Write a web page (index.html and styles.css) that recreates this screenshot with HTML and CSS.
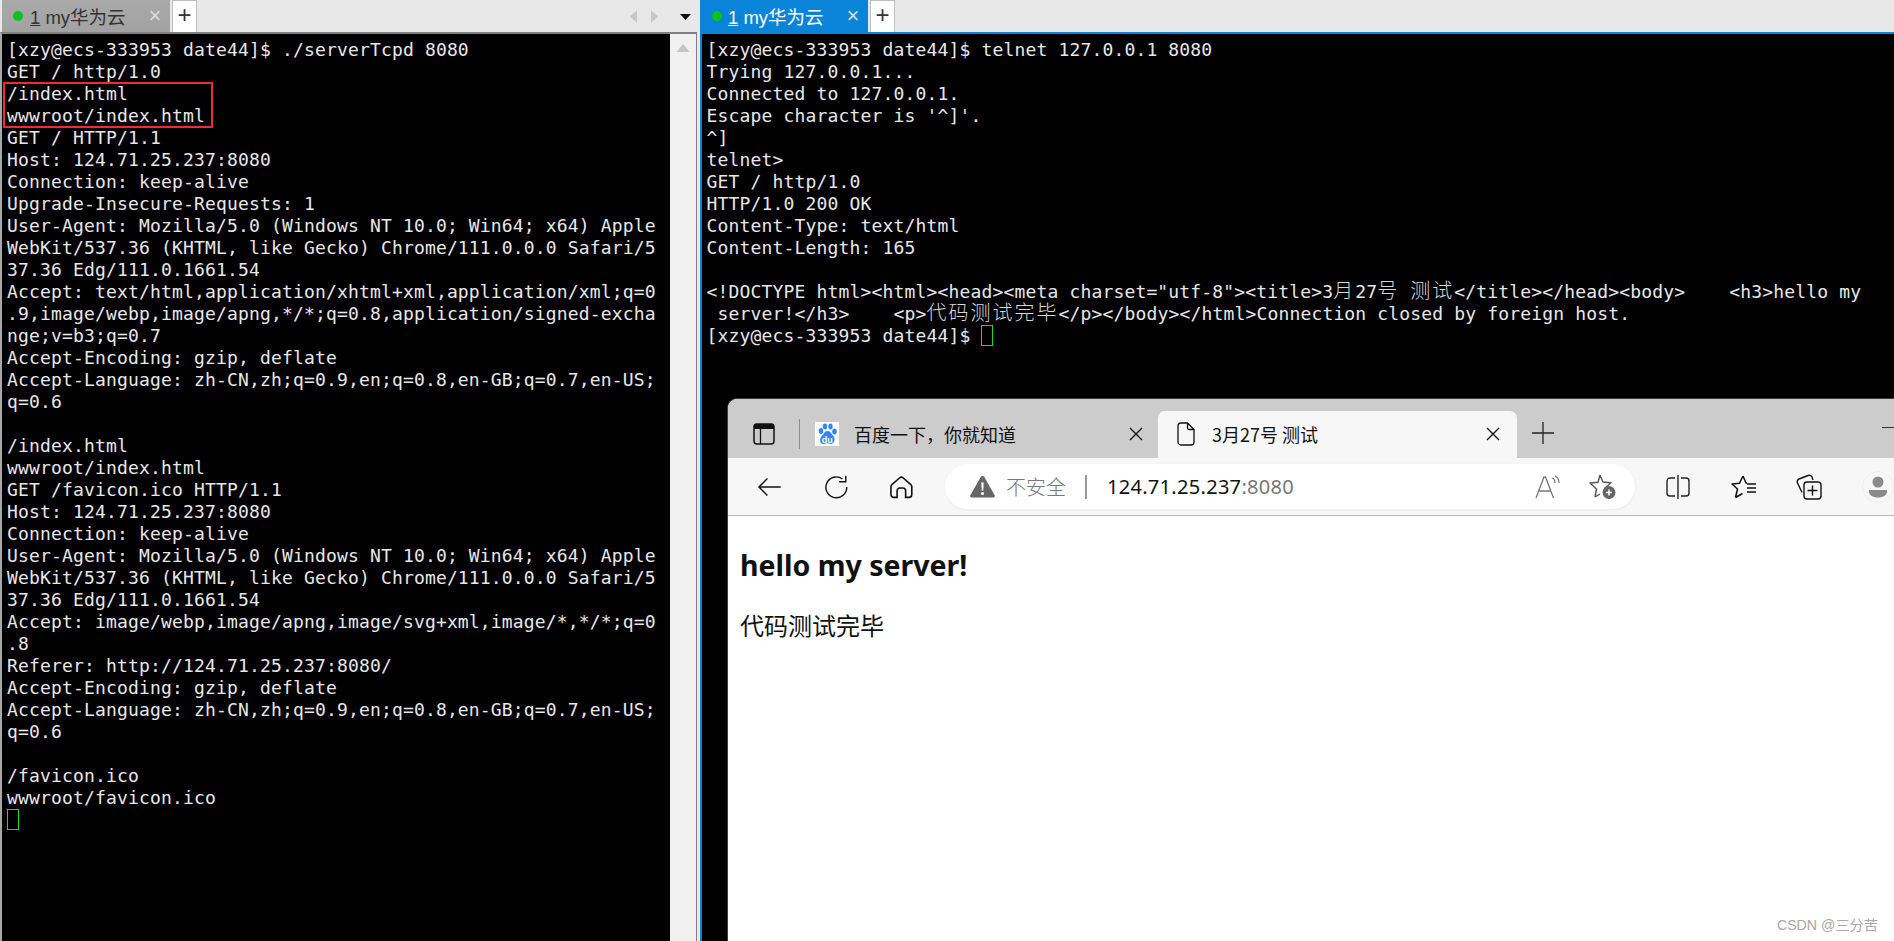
FILE: index.html
```html
<!DOCTYPE html>
<html lang="zh">
<head>
<meta charset="utf-8">
<title>Terminal and browser</title>
<link rel="stylesheet" href="styles.css">
</head>
<body>
<div class="desktop">
  <section class="pane pane-left">
    <div class="tabbar">
      <div class="tab tab-idle"><span class="dot"></span><span class="tab-label"><u>1</u> my华为云</span><span class="tab-x">×</span></div>
      <div class="tab-add">+</div>
      <div class="tab-nav">
        <svg width="70" height="32" viewBox="0 0 70 32"><path d="M9 10v13l-7-6.500z" fill="#c8c8c8"/><path d="M23 10v13l7-6.500z" fill="#c8c8c8"/><path d="M52 14h11l-5.500 6z" fill="#111"/></svg>
      </div>
    </div>
    <div class="term-wrap">
      <pre class="term">[xzy@ecs-333953 date44]$ ./serverTcpd 8080
GET / http/1.0
/index.html
wwwroot/index.html
GET / HTTP/1.1
Host: 124.71.25.237:8080
Connection: keep-alive
Upgrade-Insecure-Requests: 1
User-Agent: Mozilla/5.0 (Windows NT 10.0; Win64; x64) Apple
WebKit/537.36 (KHTML, like Gecko) Chrome/111.0.0.0 Safari/5
37.36 Edg/111.0.1661.54
Accept: text/html,application/xhtml+xml,application/xml;q=0
.9,image/webp,image/apng,*/*;q=0.8,application/signed-excha
nge;v=b3;q=0.7
Accept-Encoding: gzip, deflate
Accept-Language: zh-CN,zh;q=0.9,en;q=0.8,en-GB;q=0.7,en-US;
q=0.6

/index.html
wwwroot/index.html
GET /favicon.ico HTTP/1.1
Host: 124.71.25.237:8080
Connection: keep-alive
User-Agent: Mozilla/5.0 (Windows NT 10.0; Win64; x64) Apple
WebKit/537.36 (KHTML, like Gecko) Chrome/111.0.0.0 Safari/5
37.36 Edg/111.0.1661.54
Accept: image/webp,image/apng,image/svg+xml,image/*,*/*;q=0
.8
Referer: http://124.71.25.237:8080/
Accept-Encoding: gzip, deflate
Accept-Language: zh-CN,zh;q=0.9,en;q=0.8,en-GB;q=0.7,en-US;
q=0.6

/favicon.ico
wwwroot/favicon.ico
<span class="cursor"></span></pre>
      <div class="scrollbar"><svg width="14" height="9" viewBox="0 0 14 9"><path d="M7 0l6.500 8H.5z" fill="#c4c4c4"/></svg></div>
      <div class="red-box"></div>
    </div>
  </section>
  <div class="gap"></div>
  <section class="pane pane-right">
    <div class="tabbar">
      <div class="tab tab-active"><span class="dot"></span><span class="tab-label"><u>1</u> my华为云</span><span class="tab-x">×</span></div>
      <div class="tab-add">+</div>
    </div>
    <div class="term-wrap term-wrap-right">
      <pre class="term">[xzy@ecs-333953 date44]$ telnet 127.0.0.1 8080
Trying 127.0.0.1...
Connected to 127.0.0.1.
Escape character is '^]'.
^]
telnet&gt;
GET / http/1.0
HTTP/1.0 200 OK
Content-Type: text/html
Content-Length: 165

&lt;!DOCTYPE html&gt;&lt;html&gt;&lt;head&gt;&lt;meta charset="utf-8"&gt;&lt;title&gt;3<span class="cjk">月</span>27<span class="cjk">号</span> <span class="cjk">测试</span>&lt;/title&gt;&lt;/head&gt;&lt;body&gt;    &lt;h3&gt;hello my
 server!&lt;/h3&gt;    &lt;p&gt;<span class="cjk">代码测试完毕</span>&lt;/p&gt;&lt;/body&gt;&lt;/html&gt;Connection closed by foreign host.
[xzy@ecs-333953 date44]$ <span class="cursor"></span></pre>
    </div>
  </section>

  <div class="browser">
    <div class="b-tabs">
      <svg class="b-sidebar" width="22" height="22" viewBox="0 0 22 22"><rect x="1" y="1" width="20" height="20" rx="3" fill="none" stroke="#111" stroke-width="1.500"/><path d="M1 3.500a2.500 2.500 0 0 1 2.500-2.500h15a2.500 2.500 0 0 1 2.500 2.500V6H1z" fill="#111"/><path d="M7.500 6v15" stroke="#111" stroke-width="1.300"/></svg>
      <span class="b-sep"></span>
      <svg class="b-fav" width="24" height="24" viewBox="0 0 24 24"><rect width="24" height="24" fill="#fff"/><g fill="#3385ff"><ellipse cx="6" cy="9" rx="2.300" ry="3"/><ellipse cx="10" cy="4.500" rx="2.200" ry="3"/><ellipse cx="15.500" cy="4.500" rx="2.200" ry="3"/><ellipse cx="19.500" cy="9.500" rx="2.300" ry="3"/><path d="M12.500 9c3 0 4 3 6 5 2 2.500 1 8-2.500 8-1.500 0-2.500-.7-3.500-.7S10.500 22 8.500 22C5 22 4 17.500 6.500 14.500 8.500 12.500 9.500 9 12.500 9z"/></g><text x="12.300" y="20.500" class="b-du">du</text></svg>
      <span class="b-tab-title b-tab-title-idle">百度一下，你就知道</span>
      <svg class="b-close" width="14" height="14" viewBox="0 0 14 14"><path d="M1 1l12 12M13 1L1 13" stroke="#111" stroke-width="1.400" fill="none"/></svg>
      <div class="b-tab-active">
        <svg width="18" height="24" viewBox="0 0 18 24"><path d="M4 1h6.500L17 7.500V20a3 3 0 0 1-3 3H4a3 3 0 0 1-3-3V4a3 3 0 0 1 3-3zM10.500 1v5a1.500 1.500 0 0 0 1.500 1.500h5" fill="none" stroke="#111" stroke-width="1.300"/></svg>
        <span class="b-tab-title">3月27号 测试</span>
        <svg class="b-close-active" width="14" height="14" viewBox="0 0 14 14"><path d="M1 1l12 12M13 1L1 13" stroke="#111" stroke-width="1.400" fill="none"/></svg>
      </div>
      <svg class="b-plus" width="22" height="22" viewBox="0 0 22 22"><path d="M11 0v22M0 11h22" stroke="#222" stroke-width="1.300"/></svg>
      <span class="b-min"></span>
    </div>
    <div class="b-toolbar">
      <svg class="i-back" width="26" height="22" viewBox="0 0 26 22"><path d="M25 11H2M11 2l-9 9 9 9" fill="none" stroke="#111" stroke-width="1.500"/></svg>
      <svg class="i-reload" width="26" height="26" viewBox="0 0 26 26"><path d="M19.500 4.500A11 11 0 1 0 24 13" fill="none" stroke="#111" stroke-width="1.500"/><path d="M23 1v6.500h-7" fill="none" stroke="#111" stroke-width="1.500"/></svg>
      <svg class="i-home" width="24" height="24" viewBox="0 0 24 24"><path d="M10 2.500a3 3 0 0 1 4 0l8 7c.7.6 1 1.200 1 2V20a3 3 0 0 1-3 3h-3.500v-7a3 3 0 0 0-3-3h-3a3 3 0 0 0-3 3v7H4a3 3 0 0 1-3-3v-8.500c0-.8.300-1.400 1-2z" fill="none" stroke="#111" stroke-width="1.700"/></svg>
      <div class="b-pill">
        <svg width="25" height="23" viewBox="0 0 25 23"><path d="M12.500 1a2 2 0 0 1 1.800 1L24.500 20a1.500 1.500 0 0 1-1.300 2.500H1.800A1.500 1.500 0 0 1 .5 20L10.700 2a2 2 0 0 1 1.800-1z" fill="#666"/><path d="M11.300 7.500h2.400l-.4 8h-1.600z" fill="#fff"/><circle cx="12.500" cy="18.500" r="1.500" fill="#fff"/></svg>
        <span class="b-insecure">不安全</span>
        <span class="b-pill-sep"></span>
        <span class="b-url">124.71.25.237<span class="b-port">:8080</span></span>
        <svg class="i-read" width="26" height="24" viewBox="0 0 26 24"><path d="M1 23L9 2h1.500l8 21M4 16h12" fill="none" stroke="#777" stroke-width="1.300"/><path d="M17 3c2 .6 3 2.500 3 5M20 1c2.500 1 4 3.500 4 7" fill="none" stroke="#777" stroke-width="1.300"/></svg>
        <svg class="i-star" width="27" height="26" viewBox="0 0 27 26"><path d="M11 1l3 7 8 .7-6 5.300 1.500 0M6 23l1.500-8L1 9l8-.8L11 1M6 23l5-3" fill="none" stroke="#555" stroke-width="1.400" stroke-linejoin="round"/><circle cx="20" cy="18.500" r="6.500" fill="#666"/><path d="M20 15.500v6M17 18.500h6" stroke="#fff" stroke-width="1.500"/></svg>
      </div>
      <svg class="i-split" width="24" height="24" viewBox="0 0 24 24"><path d="M9 3H4a3 3 0 0 0-3 3v12a3 3 0 0 0 3 3h5M15 3h5a3 3 0 0 1 3 3v12a3 3 0 0 1-3 3h-5M12 0v24" fill="none" stroke="#222" stroke-width="1.400"/></svg>
      <svg class="i-favs" width="26" height="24" viewBox="0 0 26 24"><path d="M12 1l3 7 1 .1M4.500 22.500L6.500 14 1 9l7.500-.8L12 1M4.500 22.500l7-4" fill="none" stroke="#111" stroke-width="1.500" stroke-linejoin="round"/><path d="M16 9h9M16 13h9M16 17h9" stroke="#111" stroke-width="1.400"/></svg>
      <svg class="i-coll" width="26" height="26" viewBox="0 0 26 26"><path d="M6 18.500L1.500 9A3 3 0 0 1 3 5l9-3.500a3 3 0 0 1 4 1.500l1 3" fill="none" stroke="#111" stroke-width="1.400"/><rect x="8" y="8" width="17" height="17" rx="3" fill="none" stroke="#111" stroke-width="1.400"/><path d="M16.500 11.500v10M11.500 16.500h10" stroke="#111" stroke-width="1.400"/></svg>
      <div class="i-profile"><svg width="20" height="22" viewBox="0 0 20 22"><circle cx="10" cy="6" r="5.500" fill="#8a8a8a"/><path d="M1 14h18c1 5-4 7.500-9 7.500S0 19 1 14z" fill="#8a8a8a"/></svg></div>
    </div>
    <div class="b-content">
      <h3>hello my server!</h3>
      <p>代码测试完毕</p>
    </div>
  </div>
  <div class="watermark">CSDN @三分苦</div>
</div>
</body>
</html>
```
FILE: styles.css
```css
* { box-sizing: border-box; }
html, body { margin: 0; padding: 0; height: 100%; overflow: hidden; background: #fff; }
.desktop { position: relative; display: flex; width: 1894px; height: 941px; overflow: hidden; background: #e8e8e8; }

.pane { display: flex; flex-direction: column; }
.pane-left { width: 697px; }
.pane-right { width: 1194px; }
.gap { width: 3px; background: #e8e8e8; }

.tabbar { display: flex; height: 32px; background: #e8e8e8; font-family: "Liberation Sans", "Noto Sans CJK SC", sans-serif; flex: none; }
.tab { display: flex; align-items: center; width: 168px; height: 32px; padding-left: 11px; font-size: 18.500px; flex: none; }
.tab-idle { margin-left: 2px; background: linear-gradient(#a9a9a9, #a2a2a2); color: #333; }
.tab-active { background: #0a84d8; color: #fff; padding-left: 12px; }
.tab-active .tab-label { margin-left: 6px; }
.dot { width: 10px; height: 10px; border-radius: 50%; background: #10c020; flex: none; }
.tab-label { margin-left: 7px; white-space: pre; }
.tab-x { margin-left: 23px; font-size: 22px; color: #dcdcdc; line-height: 1; }
.tab-add { width: 25px; height: 32px; margin-left: 2px; background: #fff; border: 1px solid #bdbdbd; border-bottom: 0; font-size: 24px; line-height: 28px; text-align: center; color: #333; flex: none; }
.tab-nav { margin-left: 431px; width: 70px; flex: none; }
.tab-nav svg { display: block; }

.term-wrap { position: relative; display: flex; flex: 1; background: #000; border-top: 2px solid #808080; border-left: 2px solid #a8a8a8; border-right: 1px solid #808080; }
.term-wrap-right { border-top-color: #0a84d8; border-left-color: #0a84d8; border-right: 0; }
.term-wrap-right .term { padding-left: 4.500px; }
.term { flex: 1; margin: 0; padding: 5px 5px 0; font-family: "DejaVu Sans Mono", "Noto Sans CJK SC", monospace; font-size: 18px; line-height: 22px; letter-spacing: 0.160px; color: #e8e8e8; white-space: pre; overflow: hidden; }
.cjk { font-size: 20px; line-height: 0; letter-spacing: 2px; font-weight: 300; color: #d8d8d8; }
.cursor { display: inline-block; width: 12px; height: 21px; border: 1.500px solid #14e014; vertical-align: top; }
.scrollbar { width: 26px; background: #f0f0f0; display: flex; justify-content: center; padding-top: 10px; flex: none; align-items: flex-start; }
.scrollbar svg { display: block; }
.red-box { position: absolute; left: 1px; top: 48px; width: 210px; height: 46px; border: 2px solid #f02c30; }

.browser { position: absolute; left: 727px; top: 398px; right: 0; bottom: 0; display: flex; flex-direction: column; background: #fff; border-top: 1px solid #3c3c3c; border-left: 1px solid #3c3c3c; border-top-left-radius: 10px; overflow: hidden; font-family: "Noto Sans", "Noto Sans CJK SC", sans-serif; }
.b-tabs { display: flex; align-items: center; height: 59px; flex: none; background: #ccc; padding: 10px 0 0 25px; position: relative; }
.b-sep { width: 1px; height: 30px; background: #8c8c8c; margin-left: 24px; }
.b-fav { margin-left: 15px; flex: none; }
.b-du { font-family: "Liberation Sans", sans-serif; font-size: 9px; font-weight: 700; fill: #fff; text-anchor: middle; }
.b-tab-title { font-size: 18px; color: #111; white-space: pre; font-family: "Noto Sans CJK SC", sans-serif; }
.b-tab-title-idle { margin-left: 15px; width: 276px; }
.b-close { margin-left: -1px; flex: none; }
.b-tab-active { display: flex; align-items: center; align-self: flex-end; width: 359px; height: 47px; margin-left: 15px; padding: 0 0 2px 19px; background: #f7f7f7; border-radius: 7px 7px 0 0; flex: none; }
.b-tab-active .b-tab-title { margin-left: 17px; width: 274px; }
.b-close-active { flex: none; }
.b-plus { margin-left: 15px; flex: none; margin-top: -2px; }
.b-min { position: absolute; right: 0; top: 28px; width: 12px; height: 1px; background: #333; }

.b-toolbar { display: flex; align-items: center; height: 58px; flex: none; background: #f7f7f7; border-bottom: 1px solid #b9b9b9; padding-left: 29px; }
.i-reload { margin-left: 42px; }
.i-home { margin-left: 42px; }
.b-pill { display: flex; align-items: center; width: 690px; height: 45px; margin-left: 32px; padding-left: 25px; background: #fff; border-radius: 23px; box-shadow: 0 1px 3px rgba(0,0,0,.06); flex: none; }
.b-insecure { margin-left: 11px; font-size: 20px; color: #777; font-family: "Noto Sans CJK SC", sans-serif; font-weight: 300; }
.b-pill-sep { width: 2px; height: 24px; background: #999; margin-left: 19px; }
.b-url { margin-left: 20px; width: 428px; font-size: 20px; letter-spacing: 0.300px; color: #111; font-family: "Noto Sans", sans-serif; flex: none; }
.b-port { color: #777; }
.i-read { flex: none; }
.i-star { margin-left: 28px; flex: none; }
.i-split { margin-left: 31px; flex: none; }
.i-favs { margin-left: 41px; flex: none; }
.i-coll { margin-left: 39px; flex: none; }
.i-profile { width: 32px; height: 32px; margin-left: 40px; border-radius: 50%; border: 1px solid #eee; display: flex; align-items: center; justify-content: center; flex: none; }

.b-content { flex: 1; padding: 30px 0 0 12px; color: #111; }
.b-content h3 { margin: 0; font-size: 28.500px; line-height: 38px; font-weight: 700; font-family: "Noto Sans", "Noto Sans CJK SC", sans-serif; }
.b-content p { margin: 23px 0 0; font-size: 24px; line-height: 36px; font-family: "Noto Sans CJK SC", sans-serif; }

.watermark { position: absolute; right: 16px; top: 915px; font-family: "Liberation Sans", "Noto Sans CJK SC", sans-serif; font-size: 14.200px; color: #a8a8a8; line-height: 20px; }
```
